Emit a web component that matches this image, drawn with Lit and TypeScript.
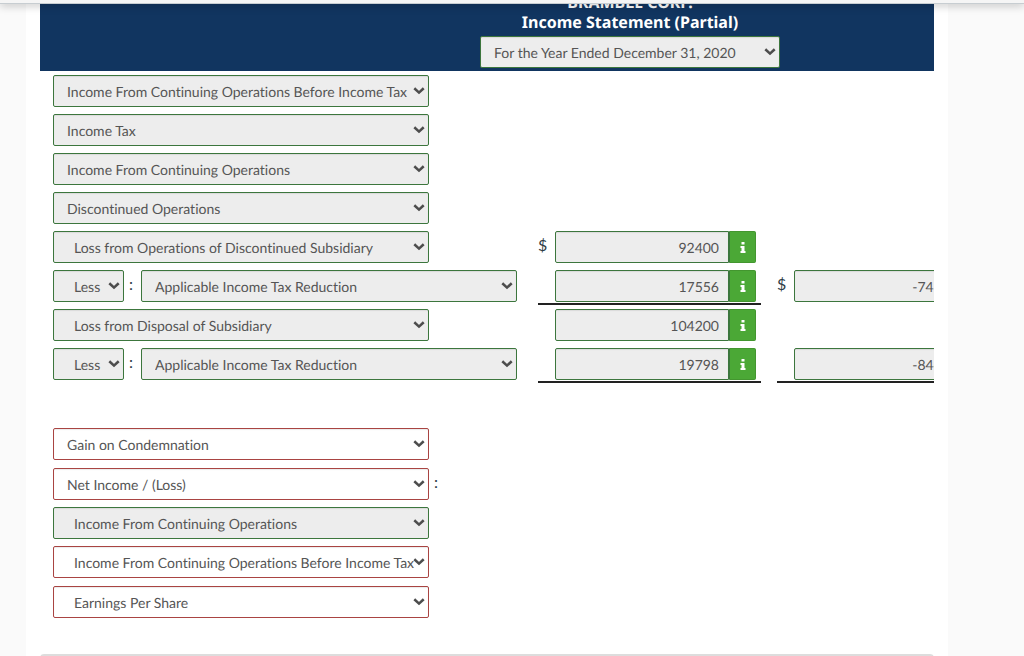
import { LitElement, html, css, nothing } from "lit";
import { customElement, property } from "lit/decorators.js";

type Size = "wide" | "short" | "date";

interface Pick {
  text: string;
  size?: Size;
  indent?: boolean;
  wrong?: boolean;
}

interface Amount {
  value: string;
  dollar?: boolean;
}

interface Line {
  picks: Pick[];
  colon?: boolean;
  first?: Amount;
  second?: Amount;
  rule?: "first" | "both";
  roomy?: boolean;
}

const lines: Line[] = [
  { picks: [{ text: "Income From Continuing Operations Before Income Tax" }] },
  { picks: [{ text: "Income Tax" }] },
  { picks: [{ text: "Income From Continuing Operations" }] },
  { picks: [{ text: "Discontinued Operations" }] },
  {
    picks: [{ text: "Loss from Operations of Discontinued Subsidiary", indent: true }],
    first: { value: "92400", dollar: true },
  },
  {
    picks: [{ text: "Less", size: "short", indent: true }, { text: "Applicable Income Tax Reduction" }],
    colon: true,
    first: { value: "17556" },
    second: { value: "-74844", dollar: true },
    rule: "first",
  },
  {
    picks: [{ text: "Loss from Disposal of Subsidiary", indent: true }],
    first: { value: "104200" },
  },
  {
    picks: [{ text: "Less", size: "short", indent: true }, { text: "Applicable Income Tax Reduction" }],
    colon: true,
    first: { value: "19798" },
    second: { value: "-84402" },
    rule: "both",
  },
  { picks: [] },
  { picks: [{ text: "Gain on Condemnation", wrong: true }], roomy: true },
  { picks: [{ text: "Net Income / (Loss)", wrong: true }], colon: true },
  { picks: [{ text: "Income From Continuing Operations", indent: true }] },
  { picks: [{ text: "Income From Continuing Operations Before Income Tax", indent: true, wrong: true }], roomy: true },
  { picks: [{ text: "Earnings Per Share", indent: true, wrong: true }] },
];

@customElement("answer-select")
export class AnswerSelect extends LitElement {
  @property() text = "";
  @property() size: Size = "wide";
  @property() label = "";
  @property({ type: Boolean }) indent = false;
  @property({ type: Boolean }) wrong = false;

  static styles = css`
    :host {
      display: inline-grid;
      vertical-align: top;
    }
    .box {
      display: grid;
      align-items: center;
    }
    .box > * {
      grid-area: 1 / 1;
    }
    .wide {
      width: 376px;
    }
    .short {
      width: 71px;
    }
    .date {
      width: 300px;
    }
    select {
      appearance: none;
      box-sizing: border-box;
      width: 100%;
      height: 32px;
      margin: 0;
      padding: 0 0 0 13px;
      border: 1px solid #3c763d;
      border-radius: 2px;
      background: #ededed;
      box-shadow: inset 0 1px 1px rgba(0, 0, 0, 0.08);
      color: #555;
      font: 14px "Lato", sans-serif;
      font-variant-ligatures: none;
      text-rendering: geometricPrecision;
      opacity: 1;
    }
    select.indent {
      padding-left: 20px;
    }
    select.wrong {
      border-color: #a94442;
      background: #fff;
    }
    svg {
      justify-self: end;
      width: 12px;
      height: 8px;
      margin-right: 4px;
      pointer-events: none;
    }
  `;

  render() {
    return html`<div class="box ${this.size}">
      <select
        class="${this.indent ? "indent" : ""} ${this.wrong ? "wrong" : ""}"
        aria-label=${this.label}
        ?disabled=${!this.wrong}
      >
        <option>${this.text}</option>
      </select>
      <svg viewBox="0 0 12 8" aria-hidden="true">
        <path d="M1.3 1.3 L6 5.6 L10.7 1.3" fill="none" stroke="#4d4d4d" stroke-width="2.6" />
      </svg>
    </div>`;
  }
}

@customElement("answer-amount")
export class AnswerAmount extends LitElement {
  @property() value = "";
  @property() label = "";
  @property({ type: Boolean }) dollar = false;

  static styles = css`
    :host {
      display: block;
    }
    .row {
      display: flex;
    }
    .sign {
      width: 17px;
      line-height: 27px;
      font-size: 16px;
    }
    input {
      box-sizing: border-box;
      width: 174px;
      height: 32px;
      margin: 0;
      padding: 0 9px;
      border: 1px solid #3c763d;
      border-radius: 2px 0 0 2px;
      background: #ededed;
      box-shadow: inset 0 1px 1px rgba(0, 0, 0, 0.08);
      color: #555;
      font: 14px "Lato", sans-serif;
      text-rendering: geometricPrecision;
      text-align: right;
    }
    button {
      display: flex;
      align-items: center;
      justify-content: center;
      width: 27px;
      height: 32px;
      padding: 0;
      border: 1px solid #43962f;
      border-left-color: #3c763d;
      border-radius: 0 2px 2px 0;
      background: #4ba836;
    }
    svg {
      width: 6px;
      height: 11px;
    }
  `;

  render() {
    return html`<div class="row">
      <span class="sign">${this.dollar ? "$" : nothing}</span>
      <input type="text" aria-label=${this.label} .value=${this.value} disabled />
      <button type="button" aria-label="Answer information">
        <svg viewBox="0 0 6 11" aria-hidden="true">
          <path d="M1.5 0H4.5V2.5H1.5Z M0.5 4H4.5V9H5.5V11H0.5V9H1.5V6H0.5Z" fill="#fff" />
        </svg>
      </button>
    </div>`;
  }
}

@customElement("app-root")
export class AppRoot extends LitElement {
  static styles = css`
    :host {
      display: block;
      position: relative;
      height: 100vh;
      overflow: hidden;
      background: #fafafa;
      color: #2d3b45;
      font: 16px "Lato", sans-serif;
    }
    .topbar {
      position: absolute;
      top: 0;
      left: 0;
      right: 0;
      height: 3px;
      background: #f5f5f5;
      border-bottom: 1px solid #c7cdd1;
      box-shadow: 0 1px 8px rgba(0, 0, 0, 0.35);
    }
    .panel {
      box-sizing: border-box;
      min-height: calc(100% + 8px);
      margin: -8px 76px 0 26px;
      padding: 0 14px;
      background: #fff;
    }
    .scroller {
      overflow: hidden;
    }
    table {
      width: 1180px;
      table-layout: fixed;
      border-collapse: separate;
      border-spacing: 0;
    }
    .label {
      width: 498px;
    }
    .amount {
      width: 223px;
    }
    .gap {
      width: 16px;
    }
    .heading {
      padding: 0 0 3px;
      background: #113560;
      color: #fff;
      font: bold 16px/20px "Noto Sans", sans-serif;
      text-rendering: geometricPrecision;
    }
    .date {
      padding-top: 4px;
    }
    td {
      box-sizing: border-box;
      height: 39px;
      padding: 4px 0 0;
      vertical-align: top;
    }
    .roomy td {
      height: 40px;
    }
    .blank td {
      height: 41px;
    }
    .ruled {
      border-bottom: 2px solid #222;
    }
    .picks {
      display: flex;
      padding-left: 13px;
    }
    .colon {
      width: 17px;
      line-height: 27px;
      text-indent: 5px;
    }
    .next {
      height: 40px;
      margin-top: 33px;
      border: 2px solid #ddd;
      border-radius: 4px;
      background: #f5f5f5;
    }
  `;

  private amountCell(amount: Amount | undefined, ruled: boolean, label: string) {
    return html`<td class=${ruled ? "ruled" : ""}>
      ${amount
        ? html`<answer-amount .value=${amount.value} .label=${label} ?dollar=${amount.dollar}></answer-amount>`
        : nothing}
    </td>`;
  }

  private row(line: Line) {
    const name = line.picks.map((p) => p.text).join(": ");
    const colon = line.colon ? html`<span class="colon">:</span>` : nothing;
    return html`<tr class=${line.picks.length === 0 ? "blank" : line.roomy ? "roomy" : ""}>
      <td>
        <div class="picks">
          ${line.picks.map(
            (p, i) => html`<answer-select
                .text=${p.text}
                .size=${p.size ?? "wide"}
                .label=${"Line item"}
                ?indent=${p.indent}
                ?wrong=${p.wrong}
              ></answer-select>${i === 0 ? colon : nothing}`
          )}
        </div>
      </td>
      ${this.amountCell(line.first, line.rule !== undefined, `${name}, amount`)}
      <td></td>
      ${this.amountCell(line.second, line.rule === "both", `${name}, net amount`)}
      <td></td>
      <td></td>
    </tr>`;
  }

  render() {
    return html`
      <main class="panel">
        <div class="scroller">
          <table>
            <colgroup>
              <col class="label" />
              <col class="amount" />
              <col class="gap" />
              <col class="amount" />
              <col class="gap" />
              <col />
            </colgroup>
            <thead>
              <tr>
                <th class="heading" colspan="6">
                  <div>BRAMBLE CORP.</div>
                  <div>Income Statement (Partial)</div>
                  <div class="date">
                    <answer-select
                      .text=${"For the Year Ended December 31, 2020"}
                      .size=${"date"}
                      .label=${"Statement period"}
                    ></answer-select>
                  </div>
                </th>
              </tr>
            </thead>
            <tbody>
              ${lines.map((line) => this.row(line))}
            </tbody>
          </table>
        </div>
        <section class="next"></section>
      </main>
      <div class="topbar"></div>
    `;
  }
}
